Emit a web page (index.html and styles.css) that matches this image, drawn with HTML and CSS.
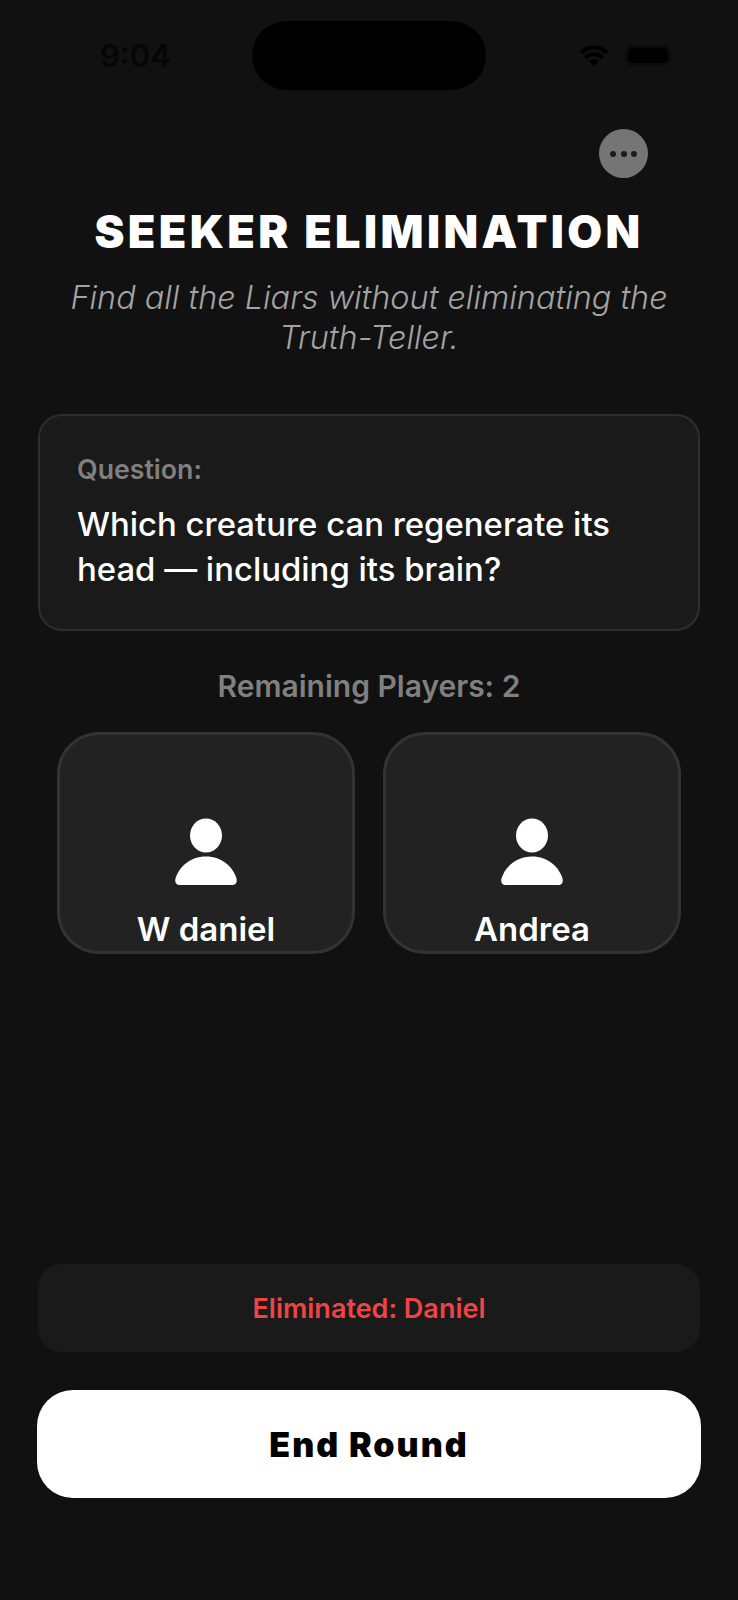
FILE: index.html
```html
<!DOCTYPE html>
<html lang="en">

<head>
    <meta charset="UTF-8">
    <meta name="viewport" content="width=device-width, initial-scale=1">
    <title>Seeker Elimination</title>
    <link rel="stylesheet" href="styles.css">
</head>

<body>

    <div class="screen">
        <!-- Status bar -->
        <div class="status-bar">
            <span class="time">9:04</span>
            <div class="island"></div>
            <div class="status-icons">
                <svg class="wifi" width="32" height="24" viewBox="0 0 32 24">
                    <path d="M16 5.5c4.6 0 8.8 1.8 11.9 4.8l2.6-2.9C26.700 3.700 21.600 1.500 16 1.500S5.300 3.700 1.500 7.400l2.600 2.900C7.200 7.300 11.400 5.500 16 5.500z" />
                    <path d="M16 12.300c2.800 0 5.300 1.100 7.200 2.900l2.700-3c-2.600-2.500-6.100-4-9.900-4s-7.300 1.500-9.900 4l2.700 3c1.900-1.800 4.400-2.900 7.200-2.900z" />
                    <path d="M16 15c-1.900 0-3.500.7-4.700 1.900l4.700 5.600 4.700-5.600C19.500 15.700 17.900 15 16 15z" />
                </svg>
                <div class="battery"></div>
            </div>
        </div>

        <div class="menu-row">
            <button class="menu-button" aria-label="More">
                <i></i><i></i><i></i>
            </button>
        </div>

        <h1 class="title">SEEKER ELIMINATION</h1>
        <p class="subtitle">Find all the Liars without eliminating the Truth-Teller.</p>

        <div class="question-card">
            <div class="question-label">Question:</div>
            <div class="question-text">Which creature can regenerate its head — including its brain?</div>
        </div>

        <div class="remaining">Remaining Players: 2</div>

        <div class="players">
            <div class="player-card">
                <svg class="player-icon" width="64" height="68" viewBox="0 0 64 68">
                    <ellipse cx="32" cy="17.500" rx="16" ry="17" />
                    <path d="M32 38.500c-16 0-27 10.500-30.500 22C.6 64 2 67 5.500 67h53c3.500 0 4.900-3 4-6.500C59 49 48 38.500 32 38.500z" />
                </svg>
                <div class="player-name">W daniel</div>
            </div>
            <div class="player-card">
                <svg class="player-icon" width="64" height="68" viewBox="0 0 64 68">
                    <ellipse cx="32" cy="17.500" rx="16" ry="17" />
                    <path d="M32 38.500c-16 0-27 10.500-30.500 22C.6 64 2 67 5.500 67h53c3.500 0 4.900-3 4-6.500C59 49 48 38.500 32 38.500z" />
                </svg>
                <div class="player-name">Andrea</div>
            </div>
        </div>

        <div class="bottom">
            <div class="eliminated">Eliminated: Daniel</div>
            <button class="end-button">End Round</button>
        </div>
    </div>

</body>

</html>
```

FILE: styles.css
```css
* {
    margin: 0;
    padding: 0;
    box-sizing: border-box;
}

body {
    font-family: 'Inter', 'Liberation Sans', sans-serif;
    background: #111111;
    color: #ffffff;
}

.screen {
    display: flex;
    flex-direction: column;
    height: 1600px;
    padding: 21px 37px 102px;
}

.status-bar {
    display: grid;
    grid-template-columns: 1fr 234px 1fr;
    height: 69px;
    margin: 0 -37px;
}

.time {
    justify-self: start;
    align-self: center;
    margin-left: 100px;
    font-size: 31px;
    font-weight: 600;
    color: #060606;
}

.island {
    background: #000000;
    border-radius: 36px;
}

.status-icons {
    display: flex;
    align-items: center;
    justify-content: flex-end;
    gap: 15px;
    padding-right: 67px;
}

.wifi {
    fill: #000000;
}

.battery {
    width: 46px;
    height: 21px;
    background: #000000;
    border: 3px solid #0b0b0b;
    border-radius: 8px;
}

.menu-row {
    display: flex;
    justify-content: flex-end;
    margin-top: 39px;
    padding-right: 53px;
}

.menu-button {
    display: flex;
    align-items: center;
    justify-content: center;
    gap: 4.700px;
    width: 49px;
    height: 49px;
    background: #757575;
    border: none;
    border-radius: 50%;
}

.menu-button i {
    width: 6px;
    height: 6px;
    background: #1c1c1c;
    border-radius: 50%;
}

.title {
    margin-top: 26px;
    font-size: 45px;
    font-weight: 900;
    line-height: 56px;
    letter-spacing: 3.400px;
    text-align: center;
}

.subtitle {
    margin-top: 18px;
    padding: 0 24px;
    font-size: 32.400px;
    font-style: italic;
    font-weight: 300;
    line-height: 40px;
    color: #a3a3a3;
    text-align: center;
}

.question-card {
    margin: 56px 1px 0;
    height: 217px;
    padding: 37px;
    background: #1a1a1a;
    border: 2px solid #2e2e2e;
    border-radius: 24px;
}

.question-label {
    font-size: 26.700px;
    font-weight: 600;
    line-height: 32px;
    color: #808080;
}

.question-text {
    margin-top: 17px;
    font-size: 32.900px;
    font-weight: 500;
    line-height: 45px;
}

.remaining {
    margin-top: 37px;
    font-size: 30px;
    font-weight: 600;
    line-height: 36px;
    color: #808080;
    text-align: center;
}

.players {
    display: flex;
    justify-content: center;
    gap: 28px;
    margin-top: 28px;
}

.player-card {
    display: flex;
    flex-direction: column;
    align-items: center;
    justify-content: flex-end;
    width: 298px;
    height: 222px;
    background: #222222;
    border: 3px solid #333333;
    border-radius: 42px;
}

.player-icon {
    fill: #ffffff;
}

.player-name {
    margin-top: 23px;
    margin-bottom: 2px;
    font-size: 33px;
    font-weight: 600;
    line-height: 40px;
}

.bottom {
    display: flex;
    flex-direction: column;
    gap: 38px;
    margin-top: auto;
}

.eliminated {
    margin: 0 1px;
    padding: 30px 0 28px;
    background: #1a1a1a;
    border-radius: 24px;
    font-size: 27px;
    font-weight: 600;
    line-height: 30px;
    color: #ef4444;
    text-align: center;
}

.end-button {
    height: 108px;
    background: #ffffff;
    border: none;
    border-radius: 36px;
    font-family: inherit;
    font-size: 34px;
    font-weight: 900;
    letter-spacing: 2px;
    color: #000000;
}
```
